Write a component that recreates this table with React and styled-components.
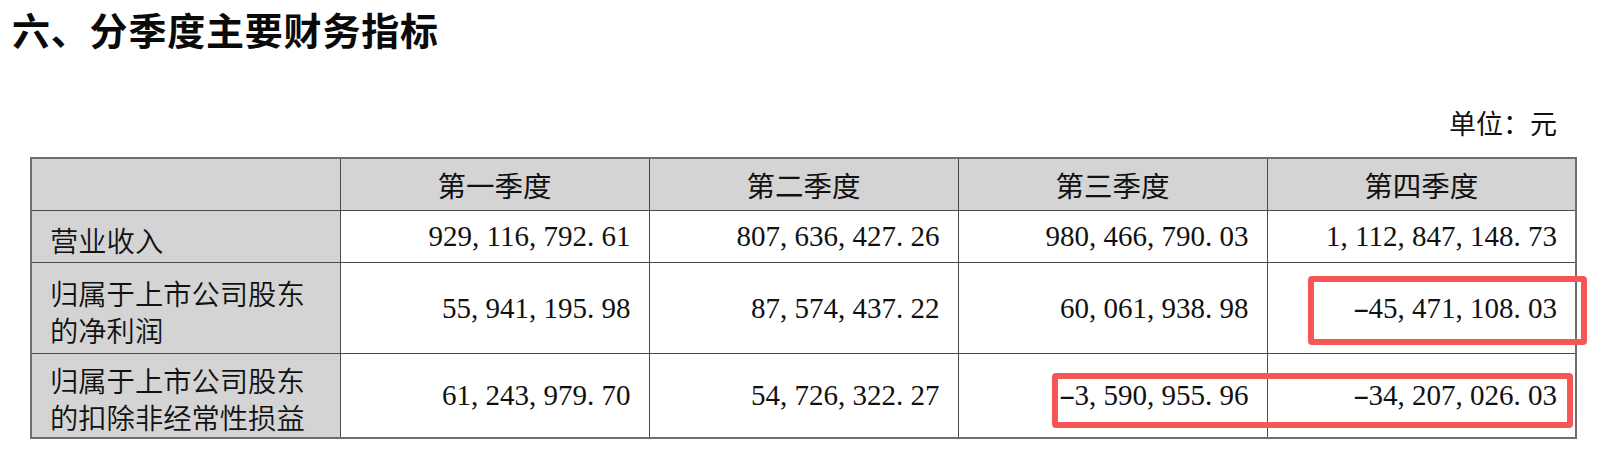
import React from 'react';
import styled, { createGlobalStyle } from 'styled-components';

const rows = [
  {
    label: '营业收入',
    height: 52,
    values: ['929,116,792.61', '807,636,427.26', '980,466,790.03', '1,112,847,148.73'],
  },
  {
    label: '归属于上市公司股东的净利润',
    height: 91,
    values: ['55,941,195.98', '87,574,437.22', '60,061,938.98', '-45,471,108.03'],
  },
  {
    label: '归属于上市公司股东的扣除非经常性损益',
    height: 85,
    values: ['61,243,979.70', '54,726,322.27', '-3,590,955.96', '-34,207,026.03'],
  },
];

const quarters = ['第一季度', '第二季度', '第三季度', '第四季度'];

const Amount = ({ value }) => (
  <>
    {value.split('').map((ch, i) =>
      /[0-9]/.test(ch) ? ch : <Punct key={i} $minus={ch === '-'}>{ch}</Punct>
    )}
  </>
);

export default () => (
  <>
    <GlobalStyle />
    <StyledPage>
      <StyledTitle>六、分季度主要财务指标</StyledTitle>
      <StyledContent>
        <StyledUnit>单位：元</StyledUnit>
        <StyledTableWrap>
          <StyledTable>
            <colgroup>
              <col style={{ width: '20%' }} />
              <col style={{ width: '20%' }} />
              <col style={{ width: '20%' }} />
              <col style={{ width: '20%' }} />
              <col style={{ width: '20%' }} />
            </colgroup>
            <thead>
              <StyledRow $height={52}>
                <StyledHead />
                {quarters.map((q) => (
                  <StyledHead key={q}>{q}</StyledHead>
                ))}
              </StyledRow>
            </thead>
            <tbody>
              {rows.map((row) => (
                <StyledRow key={row.label} $height={row.height}>
                  <StyledLabel>{row.label}</StyledLabel>
                  {row.values.map((v, i) => (
                    <StyledNum key={i}>
                      <Amount value={v} />
                    </StyledNum>
                  ))}
                </StyledRow>
              ))}
            </tbody>
          </StyledTable>
          <StyledMark style={{ left: 1278, top: 119, width: 279, height: 69 }} />
          <StyledMark style={{ left: 1022, top: 216, width: 521, height: 55 }} />
        </StyledTableWrap>
      </StyledContent>
    </StyledPage>
  </>
);

const GlobalStyle = createGlobalStyle`
  html, body {
    margin: 0;
    padding: 0;
    background: #ffffff;
  }
  body {
    font-family: "Noto Sans CJK SC", "Noto Sans", sans-serif;
    color: #111111;
  }
`;

const StyledPage = styled.div`
  width: 1598px;
  height: 450px;
  overflow: hidden;
  background: #ffffff;
`;

const StyledTitle = styled.h1`
  margin: 0;
  padding: 10px 0 0 12px;
  font-family: "Noto Sans CJK SC", sans-serif;
  font-weight: 700;
  font-size: 38px;
  letter-spacing: 0.8px;
  line-height: 38px;
  color: #0a0a0a;
`;

const StyledContent = styled.div`
  margin-left: 30px;
  width: 1547px;
`;

const StyledUnit = styled.div`
  margin-top: 61px;
  padding-right: 20px;
  text-align: right;
  font-family: "Noto Sans CJK SC", sans-serif;
  font-size: 27px;
  line-height: 28px;
  height: 28px;
  margin-bottom: 20px;
`;

const StyledTableWrap = styled.div`
  position: relative;
`;

const StyledTable = styled.table`
  width: 1547px;
  table-layout: fixed;
  border-collapse: collapse;
  border: 2px solid #6e6e6e;
  font-size: 28.5px;
`;

const StyledRow = styled.tr`
  height: ${(p) => p.$height}px;
`;

const StyledHead = styled.th`
  background: #d4d4d4;
  border: 1px solid #4a4a4a;
  font-family: "Noto Sans CJK SC", sans-serif;
  font-weight: 400;
  font-size: 28.5px;
  line-height: 34px;
  text-align: center;
  padding: 2px 0 0;
  color: #111111;
`;

const StyledLabel = styled.td`
  background: #d4d4d4;
  border: 1px solid #4a4a4a;
  font-family: "Noto Sans CJK SC", sans-serif;
  font-weight: 350;
  font-size: 28.3px;
  line-height: 37px;
  padding: 6px 20px 0 18px;
  vertical-align: middle;
  color: #111111;
`;

const StyledNum = styled.td`
  border: 1px solid #4a4a4a;
  font-family: "Liberation Serif", "Times New Roman", serif;
  font-size: 29px;
  line-height: 34px;
  text-align: right;
  padding: 0 18px 0 0;
  vertical-align: middle;
  white-space: nowrap;
  color: #111111;
`;

const Punct = styled.span`
  display: inline-block;
  width: 0.5em;
  text-align: ${(p) => (p.$minus ? 'center' : 'left')};
  transform: ${(p) => (p.$minus ? 'scaleX(1.7)' : 'none')};
`;

const StyledMark = styled.div`
  position: absolute;
  box-sizing: border-box;
  border: 6px solid #f75656;
  border-radius: 4px;
  pointer-events: none;
`;
